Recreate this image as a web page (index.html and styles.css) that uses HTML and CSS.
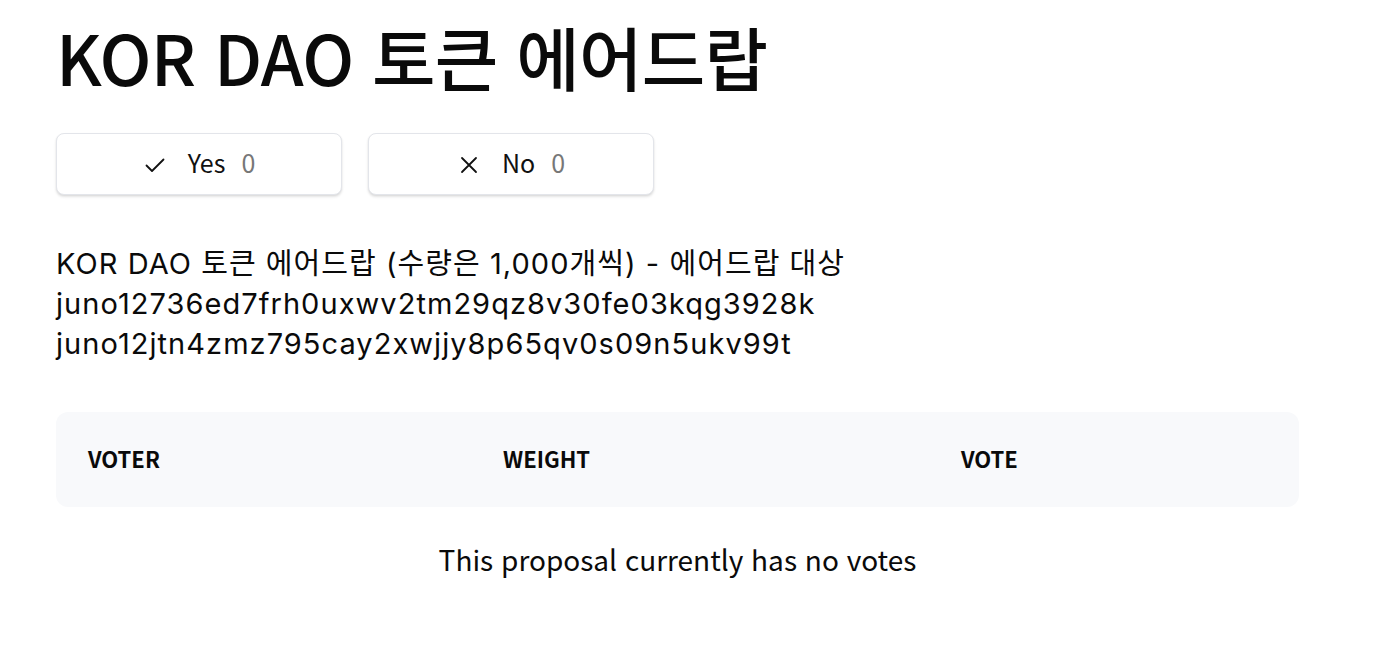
FILE: index.html
```html
<!DOCTYPE html>
<html lang="ko">
<head>
<meta charset="utf-8">
<link rel="stylesheet" href="styles.css">
</head>
<body>
<main class="page">
  <h1 class="title">KOR DAO 토큰 에어드랍</h1>
  <div class="votes">
    <button class="vote-btn">
      <svg class="icon" viewBox="0 0 24 24" width="24" height="24"><path d="M3.5 12.5l5.5 5.5L20.5 6.5" fill="none" stroke="#111" stroke-width="1.8" stroke-linecap="round" stroke-linejoin="round"/></svg>
      <span class="label">Yes</span><span class="count">0</span>
    </button>
    <button class="vote-btn">
      <svg class="icon" viewBox="0 0 24 24" width="24" height="24"><path d="M5 5l14 14M19 5L5 19" fill="none" stroke="#111" stroke-width="1.8" stroke-linecap="round"/></svg>
      <span class="label">No</span><span class="count">0</span>
    </button>
  </div>
  <div class="desc">
    <p>KOR DAO 토큰 에어드랍 (수량은 1,000개씩) - 에어드랍 대상</p>
    <p>juno12736ed7frh0uxwv2tm29qz8v30fe03kqg3928k</p>
    <p>juno12jtn4zmz795cay2xwjjy8p65qv0s09n5ukv99t</p>
  </div>
  <table class="voters">
    <thead>
      <tr><th class="c1">VOTER</th><th class="c2">WEIGHT</th><th class="c3">VOTE</th></tr>
    </thead>
  </table>
  <p class="empty">This proposal currently has no votes</p>
</main>
</body>
</html>
```

FILE: styles.css
```css
* { box-sizing: border-box; }
html, body { margin: 0; padding: 0; background: #fff; }
body {
  font-family: "Noto Sans CJK KR", "Noto Sans", sans-serif;
  color: #0a0a0a;
}
.page {
  padding: 14px 95px 0 56px;
}
.title {
  margin: 0;
  font-size: 69px;
  font-weight: 500;
  line-height: 84px;
  letter-spacing: -0.7px;
}
.votes {
  display: flex;
  gap: 26px;
  margin-top: 35px;
}
.vote-btn {
  width: 286px;
  height: 62px;
  border: 1px solid #e3e5ea;
  border-radius: 8px;
  background: #fff;
  box-shadow: 0 2px 3px rgba(0,0,0,0.10), 0 1px 2px rgba(0,0,0,0.06);
  display: flex;
  align-items: center;
  justify-content: center;
  font-family: "Noto Sans CJK KR", sans-serif;
  font-size: 25px;
  color: #111;
  padding: 0 0 4px;
}
.icon { margin-right: 21px; margin-top: 5px; }
.label { margin-right: 16px; }
.count { color: #777; }
.desc {
  margin-top: 49px;
  font-family: "Inter", "Noto Sans CJK KR", sans-serif;
  font-size: 29px;
  line-height: 40px;
  letter-spacing: 1.05px;
}
.desc p { margin: 0; }
.voters {
  margin-top: 48px;
  width: 100%;
  border-collapse: separate;
  border-spacing: 0;
  background: #f8f9fb;
  border-radius: 12px;
}
.voters th {
  height: 95px;
  text-align: left;
  font-size: 22px;
  font-weight: 700;
  padding: 0 0 4px;
}
.c1 { padding-left: 32px !important; width: 447px; }
.c2 { width: 458px; }
.empty {
  margin: 32px 0 0;
  text-align: center;
  font-size: 28px;
}
```
